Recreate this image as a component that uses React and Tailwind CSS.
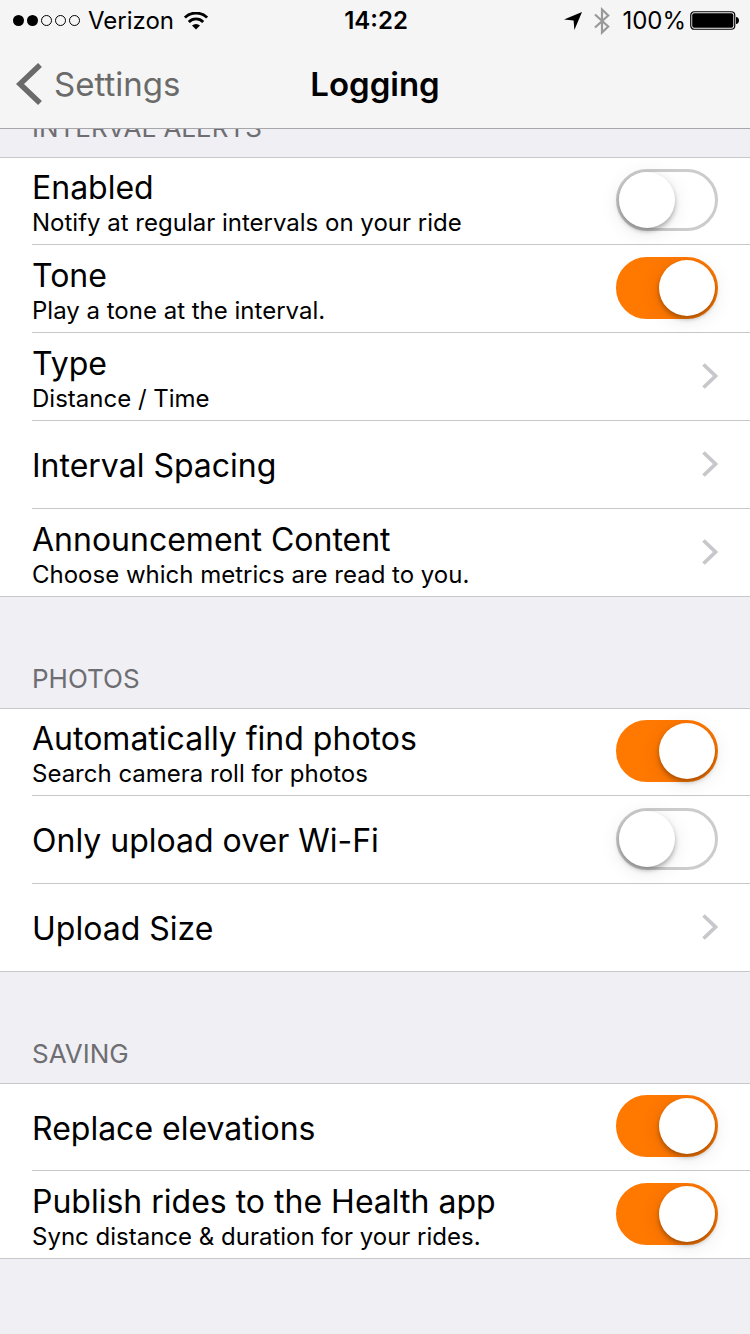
import React from "react";

const sections = [
  {
    title: "INTERVAL ALERTS",
    scrolled: true,
    rows: [
      { id: "enabled", label: "Enabled", detail: "Notify at regular intervals on your ride", type: "switch", on: false },
      { id: "tone", label: "Tone", detail: "Play a tone at the interval.", type: "switch", on: true },
      { id: "type", label: "Type", detail: "Distance / Time", type: "link" },
      { id: "spacing", label: "Interval Spacing", type: "link" },
      { id: "content", label: "Announcement Content", detail: "Choose which metrics are read to you.", type: "link" },
    ],
  },
  {
    title: "PHOTOS",
    rows: [
      { id: "find-photos", label: "Automatically find photos", detail: "Search camera roll for photos", type: "switch", on: true },
      { id: "wifi-only", label: "Only upload over Wi-Fi", type: "switch", on: false },
      { id: "upload-size", label: "Upload Size", type: "link" },
    ],
  },
  {
    title: "SAVING",
    rows: [
      { id: "elevations", label: "Replace elevations", type: "switch", on: true },
      { id: "health", label: "Publish rides to the Health app", detail: "Sync distance & duration for your rides.", type: "switch", on: true },
    ],
  },
];

const StatusBar = () => (
  <div className="grid grid-cols-[1fr_auto_1fr] items-center h-10 pt-0.5 pl-3 pr-2.5 text-2xl leading-7">
    <div className="flex items-center">
      <svg width="70" height="12" viewBox="0 0 70 12" className="mr-1.5" aria-hidden="true">
        <circle cx="6.5" cy="5.5" r="5.5" />
        <circle cx="20.5" cy="5.5" r="5.5" />
        <g fill="none" stroke="#000" strokeWidth="1">
          <circle cx="34.5" cy="5.5" r="5" />
          <circle cx="48.5" cy="5.5" r="5" />
          <circle cx="62.5" cy="5.5" r="5" />
        </g>
      </svg>
      <span>Verizon</span>
      <svg width="24" height="18" viewBox="0 0 24 18" className="ml-2.5" aria-hidden="true">
        <g fill="none" stroke="#000" strokeWidth="2.8">
          <path d="M0.9 5.6a15.8 15.8 0 0 1 22.2 0" />
          <path d="M4.8 9.9a10.2 10.2 0 0 1 14.4 0" />
        </g>
        <path d="M12 17.6l-4-4.1a6 6 0 0 1 8 0z" />
      </svg>
    </div>
    <span className="font-semibold">14:22</span>
    <div className="flex items-center justify-end">
      <svg width="18" height="18" viewBox="0 0 18 18" className="mr-3" aria-hidden="true">
        <path d="M18 0L10.4 18L9.6 8.4L0 7.6z" />
      </svg>
      <svg width="16" height="28" viewBox="0 0 16 28" className="mr-3" aria-hidden="true">
        <path d="M1 7.5L14.2 19.5L8 25.5V2.5L14.2 8.5L1 20.5" fill="none" stroke="#999" strokeWidth="2.2" />
      </svg>
      <span>100%</span>
      <svg width="50" height="20" viewBox="0 0 50 20" className="ml-1" aria-hidden="true">
        <rect x="0.75" y="0.75" width="44" height="17.5" rx="3.5" fill="none" stroke="#000" strokeWidth="1.2" />
        <rect x="2.2" y="2.2" width="41.1" height="14.6" rx="2" />
        <path d="M46 6c1.9 0.2 3 1.5 3 3.5s-1.1 3.3-3 3.5z" />
      </svg>
    </div>
  </div>
);

const NavBar = () => (
  <nav className="grid grid-cols-[1fr_auto_1fr] items-center h-22 px-4 text-[33px] leading-10">
    <a href="#settings" className="flex items-center gap-3 text-[#6a6a6a]">
      <svg width="26" height="42" viewBox="0 0 26 42" aria-hidden="true">
        <path d="M24 2L4 21L24 40" fill="none" stroke="currentColor" strokeWidth="5.5" />
      </svg>
      Settings
    </a>
    <h1 className="font-semibold">Logging</h1>
  </nav>
);

const Switch = ({ id, on }) => (
  <input
    id={id}
    type="checkbox"
    role="switch"
    defaultChecked={on}
    className="appearance-none shrink-0 w-[102px] h-[62px] mb-0.5 rounded-full border-3 border-[#cccccc] bg-white before:block before:size-14 before:rounded-full before:bg-white before:shadow-[0_3px_5px_rgba(0,0,0,0.3),0_4px_20px_rgba(0,0,0,0.1)] checked:border-[#ff7800] checked:bg-[#ff7800] checked:before:ml-10"
  />
);

const Chevron = () => (
  <svg width="16" height="26" viewBox="0 0 16 26" className="shrink-0 mb-0.5" aria-hidden="true">
    <path d="M1.5 1.5L13.5 13L1.5 24.5" fill="none" stroke="#c7c7cc" strokeWidth="3.8" />
  </svg>
);

const RowText = ({ label, detail }) => (
  <span className="flex flex-col gap-px pt-[3px]">
    <span className="text-[32px] leading-10">{label}</span>
    {detail && <span className="text-2xl leading-7">{detail}</span>}
  </span>
);

const Row = ({ row }) => (
  <li className="group h-22 first:h-[87px] pl-8 last:pl-0 last:border-b border-[#c8c7cc]">
    {row.type === "switch" ? (
      <label
        htmlFor={row.id}
        className="flex items-center justify-between h-full pr-8 border-b border-[#c8c7cc] group-last:border-b-0 group-last:pl-8"
      >
        <RowText label={row.label} detail={row.detail} />
        <Switch id={row.id} on={row.on} />
      </label>
    ) : (
      <a
        href={`#${row.id}`}
        className="flex items-center justify-between h-full pr-8 border-b border-[#c8c7cc] group-last:border-b-0 group-last:pl-8"
      >
        <RowText label={row.label} detail={row.detail} />
        <Chevron />
      </a>
    )}
  </li>
);

const Section = ({ section }) => (
  <section>
    {/* the first title is partly scrolled under the nav bar */}
    <div
      className={
        section.scrolled
          ? "flex items-end h-7 px-8 pb-3 overflow-hidden"
          : "flex items-end h-[111px] px-8 pb-3"
      }
    >
      <h2 className="text-[26px] leading-[34px] text-[#6d6d72]">{section.title}</h2>
    </div>
    <ul className="bg-white border-t border-[#c8c7cc]">
      {section.rows.map((row) => (
        <Row key={row.id} row={row} />
      ))}
    </ul>
  </section>
);

const App = () => {
  return (
    <div className="w-full min-h-screen bg-[#efeff4] font-['Inter',sans-serif] text-black">
      <header className="bg-[#f5f5f5] border-b border-[#a7a7aa]">
        <StatusBar />
        <NavBar />
      </header>
      <main>
        {sections.map((s) => (
          <Section key={s.title} section={s} />
        ))}
      </main>
    </div>
  );
};

export default App;
